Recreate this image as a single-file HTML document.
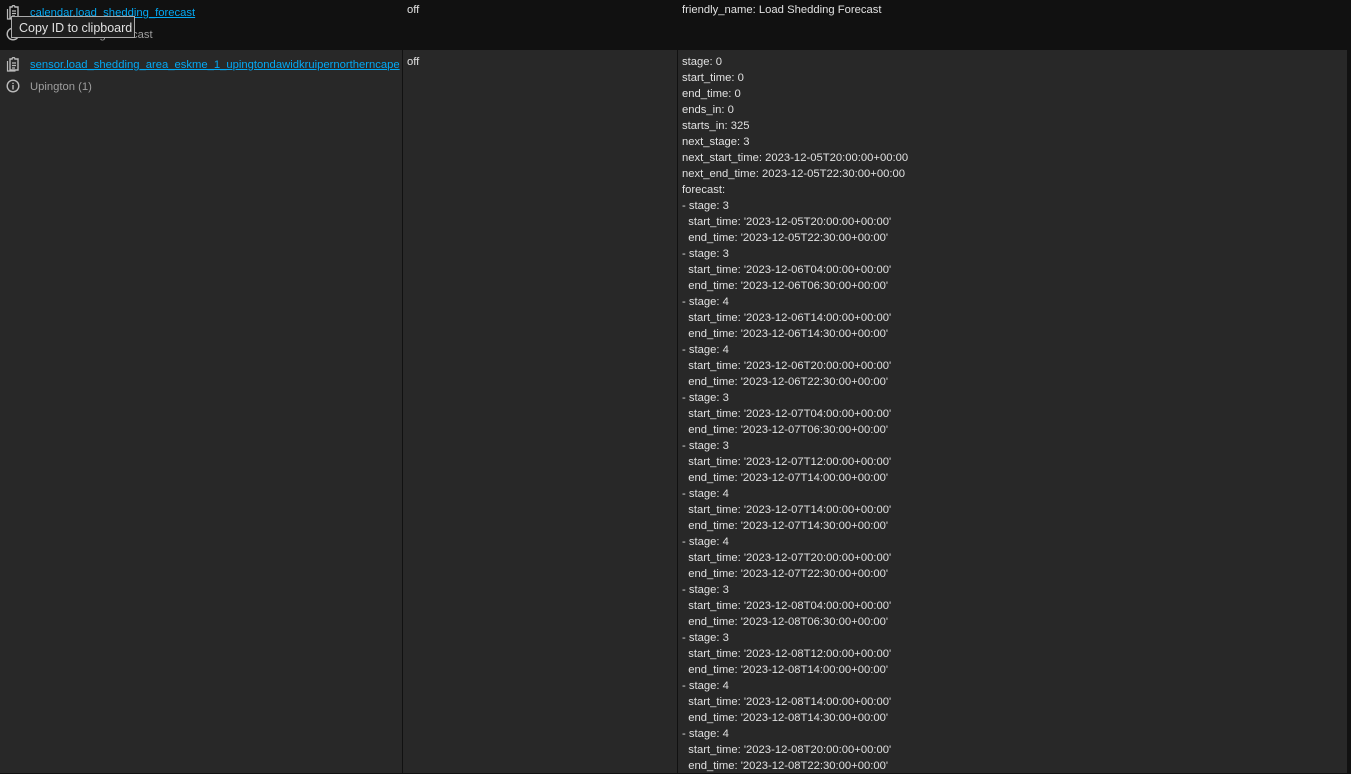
<!DOCTYPE html>
<html><head><style>
body{margin:0;background:#111;width:1351px;height:773px;overflow:hidden;font-family:"Liberation Sans",sans-serif;font-size:11.25px;color:#e1e1e1;position:relative}
.r2{position:absolute;left:0;top:50px;width:1347px;height:723px;background:#282828}
.vl{position:absolute;top:50px;height:723px;width:1px;background:#111}
.t{position:absolute;white-space:pre;line-height:16px}
a{color:#03a9f4;text-decoration:underline}
.g{color:#9e9e9e}
.tip{position:absolute;left:11px;top:16px;width:124px;height:22px;background:#1e1e1e;border:1px solid #aaa;color:#e1e1e1;font-size:12.5px;line-height:22px;padding-left:7px;box-sizing:border-box}
svg{position:absolute}
</style></head><body>
<div class="r2"></div>
<div class="vl" style="left:402px"></div>
<div class="vl" style="left:677px"></div>
<svg style="left:6px;top:5px" width="14" height="15" viewBox="0 0 14 15"><path d="M4 2h2a1.5 1.5 0 013 0h3v11H4z" fill="none" stroke="#bbb" stroke-width="1.4"/><path d="M6 6h4M6 8.5h4M6 11h3" stroke="#bbb" stroke-width="1.2"/><path d="M1.5 4v10h8" fill="none" stroke="#bbb" stroke-width="1.2"/></svg>
<div class="t" style="left:30px;top:5px"><a>calendar.load_shedding_forecast</a></div>
<div class="t g" style="left:30px;top:27px">Load Shedding Forecast</div>
<svg style="left:6px;top:27px" width="14" height="14"><circle cx="7" cy="7" r="5.8" fill="none" stroke="#bbb" stroke-width="1.4"/></svg>
<div class="tip">Copy ID to clipboard</div>
<div class="t" style="left:407px;top:2px">off</div>
<div class="t" style="left:682px;top:2px">friendly_name: Load Shedding Forecast</div>
<svg style="left:6px;top:57px" width="14" height="15" viewBox="0 0 14 15"><path d="M4 2h2a1.5 1.5 0 013 0h3v11H4z" fill="none" stroke="#bbb" stroke-width="1.4"/><path d="M6 6h4M6 8.5h4M6 11h3" stroke="#bbb" stroke-width="1.2"/><path d="M1.5 4v10h8" fill="none" stroke="#bbb" stroke-width="1.2"/></svg>
<div class="t" style="left:30px;top:57px"><a>sensor.load_shedding_area_eskme_1_upingtondawidkruipernortherncape</a></div>
<svg style="left:6px;top:79px" width="14" height="14"><circle cx="7" cy="7" r="5.8" fill="none" stroke="#bbb" stroke-width="1.4"/><path d="M7 6v4.5M7 3.8v1.2" stroke="#bbb" stroke-width="1.4"/></svg>
<div class="t g" style="left:30px;top:79px">Upington (1)</div>
<div class="t" style="left:407px;top:54px">off</div>
<div class="t" style="left:682px;top:54px">stage: 0
start_time: 0
end_time: 0
ends_in: 0
starts_in: 325
next_stage: 3
next_start_time: 2023-12-05T20:00:00+00:00
next_end_time: 2023-12-05T22:30:00+00:00
forecast:
- stage: 3
  start_time: '2023-12-05T20:00:00+00:00'
  end_time: '2023-12-05T22:30:00+00:00'
- stage: 3
  start_time: '2023-12-06T04:00:00+00:00'
  end_time: '2023-12-06T06:30:00+00:00'
- stage: 4
  start_time: '2023-12-06T14:00:00+00:00'
  end_time: '2023-12-06T14:30:00+00:00'
- stage: 4
  start_time: '2023-12-06T20:00:00+00:00'
  end_time: '2023-12-06T22:30:00+00:00'
- stage: 3
  start_time: '2023-12-07T04:00:00+00:00'
  end_time: '2023-12-07T06:30:00+00:00'
- stage: 3
  start_time: '2023-12-07T12:00:00+00:00'
  end_time: '2023-12-07T14:00:00+00:00'
- stage: 4
  start_time: '2023-12-07T14:00:00+00:00'
  end_time: '2023-12-07T14:30:00+00:00'
- stage: 4
  start_time: '2023-12-07T20:00:00+00:00'
  end_time: '2023-12-07T22:30:00+00:00'
- stage: 3
  start_time: '2023-12-08T04:00:00+00:00'
  end_time: '2023-12-08T06:30:00+00:00'
- stage: 3
  start_time: '2023-12-08T12:00:00+00:00'
  end_time: '2023-12-08T14:00:00+00:00'
- stage: 4
  start_time: '2023-12-08T14:00:00+00:00'
  end_time: '2023-12-08T14:30:00+00:00'
- stage: 4
  start_time: '2023-12-08T20:00:00+00:00'
  end_time: '2023-12-08T22:30:00+00:00'</div>
</body></html>
